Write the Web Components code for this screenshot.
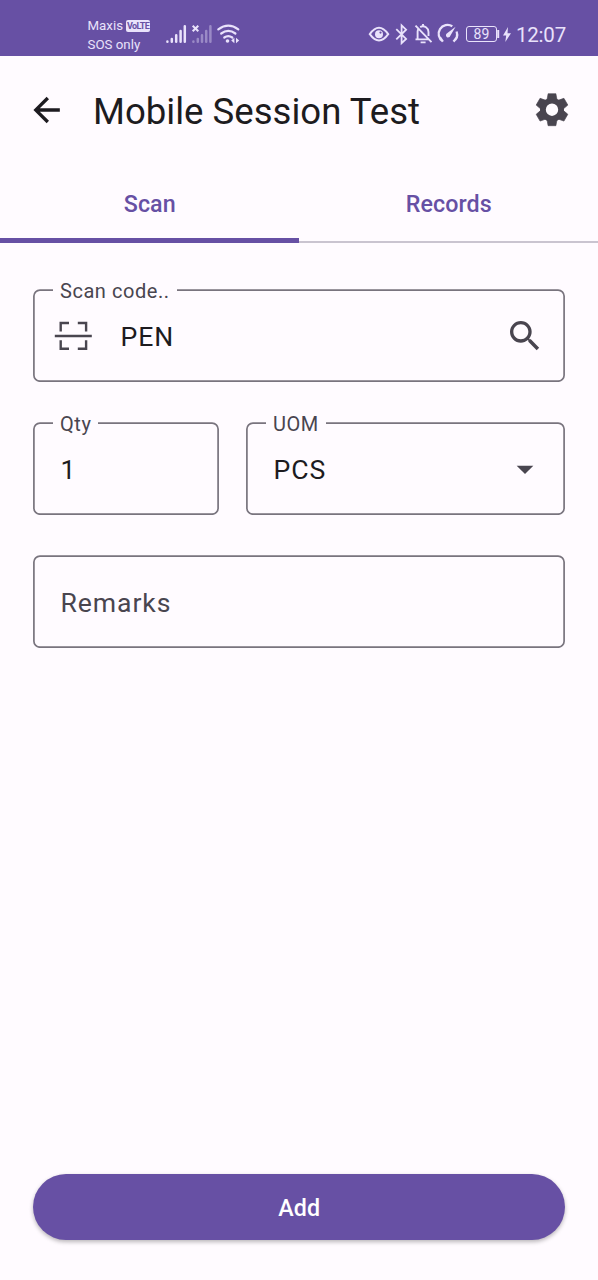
<!DOCTYPE html>
<html lang="en">
<head>
<meta charset="utf-8">
<title>Mobile Session Test</title>
<style>
html, body { margin: 0; height: 100%; background: #fffbff; }
body { font-family: Roboto, "Noto Sans", sans-serif; color: #1d1b20; overflow: hidden; }
</style>
</head>
<body>
<session-screen></session-screen>
<script>
function define(name, html) {
  const t = document.createElement('template');
  t.innerHTML = html;
  customElements.define(name, class extends HTMLElement {
    constructor() {
      super();
      this.attachShadow({ mode: 'open' }).append(t.content.cloneNode(true));
    }
  });
}

define('status-bar', `
<style>
:host { display: flex; box-sizing: border-box; height: 56px; background: #6750a4; color: #e9e2fb; padding: 14px 32px 0 87.5px; justify-content: space-between; align-items: flex-start; }
.left, .right, .line { display: flex; }
.carrier { width: 78.5px; font-size: 13.3px; line-height: 19px; padding-top: 2px; white-space: nowrap; }
.line { align-items: center; gap: 3px; }
.badge { font-size: 9px; line-height: 12px; height: 12px; width: 24px; display: flex; justify-content: center; font-weight: 700; border-radius: 2px; background: #e9e2fb; color: #6750a4; letter-spacing: -.6px; }
svg { display: block; }
time { font-size: 20.5px; line-height: 40px; padding-top: 2px; margin-left: 4px; letter-spacing: -.2px; }
.right { height: 40px; align-items: center; }
.battery { box-sizing: border-box; width: 31px; height: 16px; border: 1px solid #e9e2fb; border-radius: 3px; font-size: 14px; line-height: 15px; text-align: center; }
</style>
<div class="left">
  <div class="carrier"><div class="line">Maxis<span class="badge">VoLTE</span></div><div>SOS only</div></div>
  <svg width="76" height="36" viewBox="166 14 76 36" fill="none" stroke="#e9e2fb">
    <path stroke-width="2.5" stroke-linecap="round" d="M167.4 41.6v.2M171.8 39v2.8M176.2 35.3v6.5M180.6 31v10.8M184.8 26.3v15.5"/>
    <path opacity=".4" stroke-width="2.5" stroke-linecap="round" d="M193.4 41.6v.2M197.8 39v2.8M202 35.3v6.5M206.2 31v10.8M210.4 26.3v15.5"/>
    <path stroke-width="2" d="M192.7 25.7l5.6 5.6M198.3 25.7l-5.6 5.6"/>
    <path stroke-width="2.2" stroke-linecap="round" d="M218.3 29.3Q228.3 22 238.3 29.3M221.2 33.5Q228.3 28.2 235.4 33.5M224.3 37.5Q228.3 34.6 232.3 37.5"/>
    <circle cx="227.5" cy="41" r="1.8" fill="#e9e2fb" stroke="none"/>
    <path fill="#e9e2fb" stroke="none" d="M231.2 40.5l3.2-2.700v5.400zM239.2 40.500l-3.200-2.700v5.400z"/>
  </svg>
</div>
<div class="right">
  <svg width="98" height="40" viewBox="368 14 98 40" fill="none" stroke="#e9e2fb" stroke-width="2">
    <path d="M369.8 34.2Q379 21.5 388.2 34.2Q379 46.9 369.8 34.2Z"/>
    <circle cx="379" cy="34.2" r="4" fill="#e9e2fb" stroke="none"/><circle cx="380.5" cy="32.6" r="1.1" fill="#6750a4" stroke="none"/>
    <path stroke-width="1.8" d="M396.3 29.2l9.8 9.7-4.5 4.3V25.4l4.5 4.3-9.8 9.6"/>
    <path stroke-width="1.9" d="M415.5 25.7l16 16.5M417.6 38.8V31.5Q417.7 30 418.5 28.8M420.2 27.1Q423 25.4 426 27.3Q428.5 29 428.5 32V36M415.5 39.4H428.3M423 24v2M420.6 42.4h5"/>
    <path stroke-width="2.3" d="M442.8 41.4A8.7 8.7 0 0 1 452.3 26.3M456.6 31.5A8.7 8.7 0 0 1 453.4 41.4M440 37.3l2.9 4.3M456.8 37.3l-3.2 4.3"/>
    <path fill="#e9e2fb" stroke="none" d="M455.6 26.8L450.2 36a2.2 2.2 0 1 1-3.1-2.7z"/>
  </svg>
  <div class="battery">89</div>
  <svg width="15" height="40" viewBox="497 14 15 40" fill="#e9e2fb"><rect x="497.2" y="30" width="2" height="8"/><path d="M508 27l-5 8.5h3.2l-.9 6.5 5.7-8.8h-3.5z"/></svg>
  <time>12:07</time>
</div>`);

define('app-header', `
<style>
:host { display: flex; align-items: center; height: 108px; box-sizing: border-box; padding: 0 26px 0 26.5px; }
h1 { flex: 1; margin: 3px 0 0 26.5px; font-weight: 400; font-size: 36.6px; line-height: 46px; white-space: nowrap; }
svg { display: block; flex: none; }
</style>
<svg width="40" height="40" viewBox=".3 0 24 24" fill="#1d1b20"><path d="M20 11v2H8l5.5 5.5-1.42 1.42L4.16 12l7.92-7.92L13.5 5.5 8 11z"/></svg>
<h1><slot></slot></h1>
<svg width="40" height="40" viewBox="-20 -19.7 40 40" fill="#49454f">
  <defs><path id="tooth" d="M-3.9-16H3.9L5-10H-5z" stroke="#49454f" stroke-width=".6" stroke-linejoin="round"/></defs>
  <circle r="9.1" fill="none" stroke="#49454f" stroke-width="5.8"/>
  <use href="#tooth"/><use href="#tooth" transform="rotate(60)"/><use href="#tooth" transform="rotate(120)"/><use href="#tooth" transform="rotate(180)"/><use href="#tooth" transform="rotate(240)"/><use href="#tooth" transform="rotate(300)"/>
</svg>`);

define('tab-item', `
<style>
:host { flex: 1; box-sizing: border-box; height: 79px; display: flex; justify-content: center; padding: 24px 0 0 .5px; font-size: 23.25px; line-height: 32px; font-weight: 500; letter-spacing: .1px; color: #6750a4; border-bottom: 2px solid #cac4d0; }
:host([selected]) { border-bottom: 5px solid #6750a4; }
</style><slot></slot>`);

define('tab-bar', `<style>:host { display: flex; }</style><slot></slot>`);

define('outlined-field', `
<style>
:host { display: flex; position: relative; box-sizing: border-box; height: 93px; align-items: center; padding: 3px 20px 0 27.5px; font-size: 26.6px; line-height: 36px; letter-spacing: .9px; }
.outline { position: absolute; inset: 0; width: 100%; height: 100%; }
.outline rect { x: .9px; y: 1.1px; width: calc(100% - 1.8px); height: calc(100% - 1.9px); rx: 6px; fill: none; stroke: #79747e; stroke-width: 1.7px; }
.value { flex: 1; position: relative; }
::slotted([slot=label]) { position: absolute; left: 20px; top: -10px; padding: 0 7px; background: #fffbff; color: #49454f; font-size: 20px; line-height: 24px; letter-spacing: .55px; white-space: nowrap; }
::slotted(svg) { display: block; position: relative; flex: none; top: -1px; }
</style>
<svg class="outline"><rect/></svg>
<slot name="label"></slot><slot name="leading"></slot>
<span class="value"><slot></slot></span>
<slot name="trailing"></slot>`);

define('primary-button', `
<style>
:host { display: flex; align-items: center; justify-content: center; box-sizing: border-box; height: 66px; padding: 2px 0 0 .5px; border-radius: 33px; background: #6750a4; color: #fff; font-size: 23.25px; font-weight: 500; letter-spacing: .17px; box-shadow: 0 2px 4px rgba(0,0,0,.28); }
</style><slot></slot>`);

define('session-screen', `
<style>
:host { display: flex; flex-direction: column; height: 1280px; width: 598px; background: #fffbff; }
form { display: grid; grid-template-columns: 186px 319px; gap: 40px 27px; padding: 46px 33px 0; }
.wide { grid-column: 1 / -1; }
.hint { color: #49454f; }
primary-button { margin: auto 33px 40px; }
</style>
<status-bar></status-bar>
<app-header>Mobile Session Test</app-header>
<tab-bar><tab-item selected>Scan</tab-item><tab-item>Records</tab-item></tab-bar>
<form>
  <outlined-field class="wide">
    <span slot="label">Scan code..</span>
    <svg slot="leading" width="38" height="30" viewBox="54 321 38 30" fill="none" stroke="#49454f" stroke-width="2.4" style="margin:0 28.5px 0 -6.5px"><path d="M54.8 336h37M60.7 331.5v-8.5h8.3M77.8 323h8.3v8.5M60.7 340.2v8.5h8.3M77.8 348.7h8.3v-8.5"/></svg>
    PEN
    <svg slot="trailing" width="40" height="40" viewBox="0 0 24 24" fill="#49454f"><path d="M9.5 3A6.5 6.5 0 0 1 16 9.5C16 11.11 15.41 12.59 14.44 13.73L14.71 14H15.5L20.5 19 19 20.5 14 15.5V14.71L13.73 14.44C12.59 15.41 11.11 16 9.5 16A6.5 6.5 0 0 1 3 9.5 6.5 6.5 0 0 1 9.5 3M9.5 5C7 5 5 7 5 9.5S7 14 9.5 14 14 12 14 9.5 12 5 9.5 5Z"/></svg>
  </outlined-field>
  <outlined-field><span slot="label">Qty</span>1</outlined-field>
  <outlined-field><span slot="label">UOM</span>PCS
    <svg slot="trailing" width="40" height="40" viewBox="0 0 24 24" fill="#49454f"><path d="M7 10l5 5 5-5z"/></svg>
  </outlined-field>
  <outlined-field class="wide"><span class="hint">Remarks</span></outlined-field>
</form>
<primary-button>Add</primary-button>`);
</script>
</body>
</html>
